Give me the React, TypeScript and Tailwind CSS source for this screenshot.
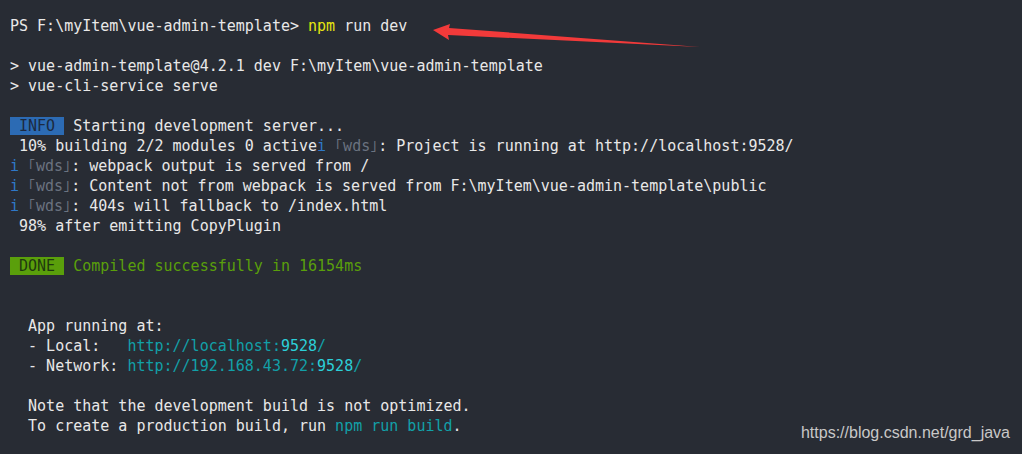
const mono = { fontFamily: '"DejaVu Sans Mono", "Liberation Mono", monospace' };

const Wds = () => (
  <>
    <span className="text-[#2f78c8]">i</span>
    <span className="text-[#6b7380]"> ｢wds｣</span>
    <span>: </span>
  </>
);

const Line = ({ children }: { children?: React.ReactNode }) => (
  <div className="h-5 leading-5 whitespace-pre">{children ?? ' '}</div>
);

const App = () => {
  return (
    <div className="relative w-[1022px] h-[454px] overflow-hidden bg-[#282c34] text-[#e8e8e8]">
      <div className="pl-[10px] pt-[16px] text-[15px]" style={mono}>
        <Line>
          PS F:\myItem\vue-admin-template&gt; <span className="text-[#e5e510]">npm</span> run dev
        </Line>
        <Line />
        <Line>&gt; vue-admin-template@4.2.1 dev F:\myItem\vue-admin-template</Line>
        <Line>&gt; vue-cli-service serve</Line>
        <Line />
        <Line>
          <span className="bg-[#2c6bb4] text-[#1c2a40]"> INFO </span> Starting development server...
        </Line>
        <Line>
          {' 10% building 2/2 modules 0 active'}
          <Wds />
          Project is running at http://localhost:9528/
        </Line>
        <Line>
          <Wds />
          webpack output is served from /
        </Line>
        <Line>
          <Wds />
          Content not from webpack is served from F:\myItem\vue-admin-template\public
        </Line>
        <Line>
          <Wds />
          404s will fallback to /index.html
        </Line>
        <Line>{' 98% after emitting CopyPlugin'}</Line>
        <Line />
        <Line>
          <span className="bg-[#5a9f0b] text-[#1f3a10]"> DONE </span>
          <span className="text-[#5a9f0b]"> Compiled successfully in 16154ms</span>
        </Line>
        <Line />
        <Line />
        <Line>{'  App running at:'}</Line>
        <Line>
          {'  - Local:   '}
          <span className="text-[#12a0a8]">http://localhost:</span>
          <span className="text-[#2ccfd8]">9528</span>
          <span className="text-[#12a0a8]">/</span>
        </Line>
        <Line>
          {'  - Network: '}
          <span className="text-[#12a0a8]">http://192.168.43.72:</span>
          <span className="text-[#2ccfd8]">9528</span>
          <span className="text-[#12a0a8]">/</span>
        </Line>
        <Line />
        <Line>{'  Note that the development build is not optimized.'}</Line>
        <Line>
          {'  To create a production build, run '}
          <span className="text-[#12a0a8]">npm run build</span>.
        </Line>
      </div>

      <svg className="absolute left-0 top-0" width="1022" height="60" viewBox="0 0 1022 60">
        <polygon points="433,30 450,24 449,28 700,47 448,35 449,40" fill="#f23a3a" />
      </svg>

      <div
        className="absolute right-[12px] bottom-[9px] text-[16px] text-[#c8c8c8]"
        style={{ fontFamily: '"Liberation Sans", Arial, sans-serif' }}
      >
        https://blog.csdn.net/grd_java
      </div>
    </div>
  );
};

export default App;
